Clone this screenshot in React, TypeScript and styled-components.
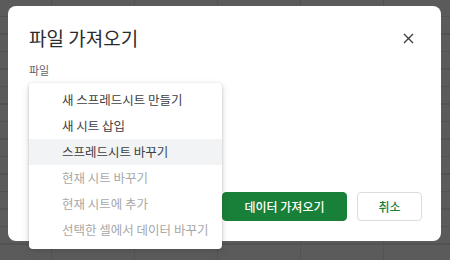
import React from "react";
import styled, { createGlobalStyle } from "styled-components";

const GlobalStyle = createGlobalStyle`
  html, body {
    margin: 0;
    padding: 0;
  }
  body {
    width: 450px;
    height: 260px;
    overflow: hidden;
    font-family: "Noto Sans CJK KR", "Noto Sans", sans-serif;
    background-color: #5b5b5b;
    background-image:
      repeating-linear-gradient(to bottom, transparent 0, transparent 16px, #525252 16px, #525252 17.5px),
      repeating-linear-gradient(to right, transparent 0, transparent 51px, #525252 51px, #525252 52px, transparent 52px, transparent 83px);
  }
`;

const items = [
  { label: "새 스프레드시트 만들기", disabled: false, active: false },
  { label: "새 시트 삽입", disabled: false, active: false },
  { label: "스프레드시트 바꾸기", disabled: false, active: true },
  { label: "현재 시트 바꾸기", disabled: true, active: false },
  { label: "현재 시트에 추가", disabled: true, active: false },
  { label: "선택한 셀에서 데이터 바꾸기", disabled: true, active: false },
];

export default function App() {
  return (
    <Page>
      <GlobalStyle />
      <Dialog>
        <Header>
          <Title>파일 가져오기</Title>
          <CloseButton aria-label="닫기">
            <svg width="11" height="11" viewBox="0 0 11 11">
              <path d="M1 1L10 10M10 1L1 10" stroke="#3c4043" strokeWidth="1.4" fill="none" />
            </svg>
          </CloseButton>
        </Header>
        <FieldLabel>파일</FieldLabel>
        <Footer>
          <PrimaryButton>데이터 가져오기</PrimaryButton>
          <SecondaryButton>취소</SecondaryButton>
        </Footer>
        <Menu>
          {items.map((item) => (
            <MenuItem key={item.label} $disabled={item.disabled} $active={item.active}>
              {item.label}
            </MenuItem>
          ))}
        </Menu>
      </Dialog>
    </Page>
  );
}

const Page = styled.div`
  padding: 6px 9px 0 8px;
`;

const Dialog = styled.div`
  position: relative;
  box-sizing: border-box;
  height: 235px;
  background: #fff;
  border-radius: 8px;
  display: flex;
  flex-direction: column;
  padding: 20px 19px 20px 21px;
`;

const Header = styled.div`
  display: flex;
  align-items: center;
  justify-content: space-between;
  height: 24px;
`;

const Title = styled.h1`
  margin: 0;
  font-size: 19px;
  font-weight: 400;
  line-height: 24px;
  color: #2a2b2e;
`;

const CloseButton = styled.button`
  display: flex;
  align-items: center;
  justify-content: center;
  width: 20px;
  height: 20px;
  margin-right: 4px;
  padding: 0;
  border: none;
  background: none;
`;

const FieldLabel = styled.div`
  margin-top: 13px;
  font-size: 11px;
  line-height: 14px;
  color: #5f6368;
`;

const Footer = styled.div`
  margin-top: auto;
  display: flex;
  justify-content: flex-end;
  gap: 10px;
`;

const BaseButton = styled.button`
  box-sizing: border-box;
  height: 29px;
  border-radius: 4px;
  font-family: inherit;
  font-size: 12px;
  font-weight: 500;
  padding: 0;
`;

const PrimaryButton = styled(BaseButton)`
  width: 125px;
  background: #188038;
  border: 1px solid #188038;
  color: #fff;
`;

const SecondaryButton = styled(BaseButton)`
  width: 65px;
  background: #fff;
  border: 1px solid #dadce0;
  color: #188038;
`;

const Menu = styled.ul`
  position: absolute;
  left: 21px;
  top: 77px;
  width: 193px;
  margin: 0;
  padding: 4px 0 6px;
  list-style: none;
  background: #fff;
  border-radius: 4px;
  box-shadow: 0 1px 3px rgba(60, 64, 67, 0.3), 0 3px 8px rgba(60, 64, 67, 0.15);
`;

const MenuItem = styled.li<{ $disabled: boolean; $active: boolean }>`
  height: 26px;
  line-height: 26px;
  padding-left: 33px;
  font-size: 12.5px;
  white-space: nowrap;
  color: ${({ $disabled }) => ($disabled ? "#a8a8a8" : "#3c4043")};
  background: ${({ $active }) => ($active ? "#f1f3f4" : "transparent")};
`;
